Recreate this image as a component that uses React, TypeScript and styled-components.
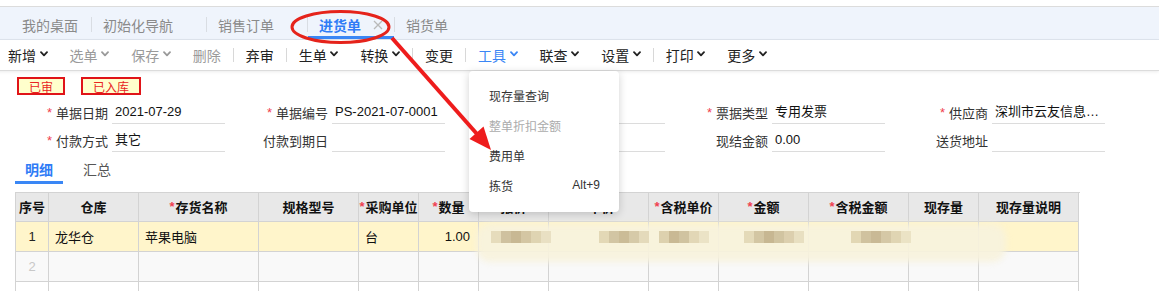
import React from "react";
import styled, { createGlobalStyle, css } from "styled-components";

const GlobalStyle = createGlobalStyle`
  html, body { margin: 0; padding: 0; background: #ffffff; }
  body { font-family: "Liberation Sans", "Noto Sans CJK SC", sans-serif; }
  * { box-sizing: border-box; }
`;

const FONT = `"Liberation Sans", "Noto Sans CJK SC", sans-serif`;

const Page = styled.div`
  position: relative;
  width: 1159px;
  height: 291px;
  overflow: hidden;
  font-family: ${FONT};
  padding-top: 6px;
`;

/* ---------- tab bar ---------- */
const TabBar = styled.div`
  display: flex;
  align-items: stretch;
  height: 34px;
  background: #eff4fc;
  border-top: 1px solid #dcdcdc;
  border-bottom: 1px solid #dfe5ee;
  padding-left: 11px;
`;

const Tab = styled.div<{ $active?: boolean; $padRight: number }>`
  display: flex;
  align-items: center;
  height: 32px;
  padding: 6px ${(p) => p.$padRight}px 0 11px;
  font-size: 14px;
  color: #8a8a8a;
  border-bottom: 3px solid transparent;
  white-space: nowrap;
  ${(p) =>
    p.$active &&
    css`
      color: #2f7cf6;
      font-weight: bold;
      border-bottom-color: #3a87f5;
    `}
`;

const TabSep = styled.div`
  align-self: center;
  width: 1px;
  height: 15px;
  margin-top: 3px;
  background: #d9dde3;
`;

const CloseX = styled.svg`
  margin-left: 12px;
  width: 10px;
  height: 10px;
`;

/* ---------- toolbar ---------- */
const Toolbar = styled.div`
  position: relative;
  z-index: 5;
  display: flex;
  align-items: center;
  height: 31px;
  border-bottom: 1px solid #dcdcdc;
  box-shadow: 0 1px 3px rgba(0, 0, 0, 0.08);
  background: #fff;
  margin-left: -3px;
`;

const ToolButton = styled.div<{ $tone: "normal" | "disabled" | "active" }>`
  position: relative;
  display: flex;
  align-items: center;
  height: 30px;
  padding: 0 11px;
  font-size: 14px;
  white-space: nowrap;
  color: ${(p) =>
    p.$tone === "disabled" ? "#9a9a9a" : p.$tone === "active" ? "#3b86f5" : "#222"};
`;

const Chevron = styled.svg`
  width: 8px;
  height: 6px;
  margin-left: 3.6px;
  margin-top: -3px;
`;

const ToolSep = styled.div`
  width: 1px;
  height: 14px;
  margin: 0 1px;
  background: #d8d8d8;
`;

/* ---------- dropdown ---------- */
const Menu = styled.div`
  position: absolute;
  top: calc(100% + 1px);
  left: 2px;
  width: 150px;
  padding: 9px 0 12px;
  background: #fff;
  border-radius: 4px;
  box-shadow: 0 2px 8px rgba(0, 0, 0, 0.18);
  z-index: 20;
`;

const MenuItem = styled.div<{ $disabled?: boolean }>`
  display: flex;
  align-items: center;
  justify-content: space-between;
  height: 30px;
  padding: 0 19px 0 20px;
  font-size: 12px;
  color: ${(p) => (p.$disabled ? "#ababab" : "#333")};
`;

/* ---------- content ---------- */
const Content = styled.div`
  display: flex;
  flex-direction: column;
`;

const Badges = styled.div`
  display: flex;
  gap: 16px;
  margin-top: 6px;
  padding-left: 17px;
`;

const Badge = styled.div`
  height: 18px;
  padding: 0 10px;
  display: flex;
  align-items: center;
  border: 2px solid #e01418;
  background: #ffffcc;
  color: #e8251f;
  font-size: 12px;
`;

const FormGrid = styled.div`
  display: grid;
  grid-template-columns: repeat(5, 220px);
  row-gap: 2px;
  margin-top: 3px;
  padding-left: 8px;
`;

const FormItem = styled.div`
  display: flex;
  align-items: flex-end;
`;

const Label = styled.div`
  width: 100px;
  margin-right: 4px;
  height: 25px;
  padding-top: 2px;
  display: flex;
  align-items: center;
  justify-content: flex-end;
  font-size: 13px;
  color: #333;
  white-space: nowrap;
`;

const Star = styled.span<{ $gap?: boolean }>`
  color: #f0404f;
  font-family: "Liberation Sans", sans-serif;
  margin-right: ${(p) => (p.$gap ? 4 : 1)}px;
`;

const Field = styled.div`
  width: 113px;
  height: 26px;
  line-height: 23px;
  padding: 2px 0 0 3px;
  border-bottom: 1px solid #dcdcdc;
  font-size: 13px;
  color: #111;
  white-space: nowrap;
  overflow: hidden;
  text-overflow: ellipsis;
`;

const DetailTabs = styled.div`
  display: flex;
  gap: 10px;
  margin-top: 4px;
  padding-left: 15px;
`;

const DetailTab = styled.div<{ $active?: boolean }>`
  height: 28px;
  padding: 0 10px;
  display: flex;
  align-items: center;
  font-size: 14px;
  color: #555;
  border-bottom: 3px solid transparent;
  ${(p) =>
    p.$active &&
    css`
      color: #2f7cf6;
      font-weight: bold;
      border-bottom-color: #3a87f5;
    `}
`;

/* ---------- table ---------- */
const TableWrap = styled.div`
  position: relative;
  margin-top: 8px;
  margin-left: 15px;
  width: 1065px;
`;

const Grid = styled.div<{ $cols: string }>`
  display: grid;
  grid-template-columns: ${(p) => p.$cols};
  border-left: 1px solid #d3d3d3;
  border-top: 1px solid #d3d3d3;
`;

const Cell = styled.div<{ $kind: "head" | "sel" | "alt" | "plain"; $align?: string }>`
  display: flex;
  align-items: center;
  justify-content: ${(p) => p.$align || "flex-start"};
  padding: 0 6px;
  border-right: 1px solid #d3d3d3;
  border-bottom: 1px solid #d3d3d3;
  font-size: 13px;
  color: #111;
  white-space: nowrap;
  overflow: hidden;
  height: ${(p) => (p.$kind === "head" ? 29 : 30)}px;
  background: ${(p) =>
    p.$kind === "head" ? "#e8e8e8" : p.$kind === "sel" ? "#fff5cb" : p.$kind === "alt" ? "#f9f9f9" : "#fff"};
  ${(p) =>
    p.$kind === "head" &&
    css`
      font-weight: bold;
      color: #111;
      padding: 0 2px 1px;
    `}
`;

const RowNo = styled.span<{ $muted?: boolean }>`
  color: ${(p) => (p.$muted ? "#c8c8c8" : "#222")};
`;

const Smudge = styled.div`
  position: absolute;
  left: 461px;
  top: 30px;
  width: 530px;
  height: 40px;
  pointer-events: none;
`;

const SmudgeWash = styled.div`
  position: absolute;
  inset: 2px 0 0 0;
  border-radius: 14px;
  background: rgba(248, 242, 221, 0.93);
  filter: blur(3px);
`;

const Tile = styled.div`
  position: absolute;
  height: 12px;
  top: 9px;
  filter: blur(0.6px);
`;

/* ---------- annotation ---------- */
const Annotation = styled.svg`
  position: absolute;
  left: 0;
  top: 0;
  width: 1159px;
  height: 291px;
  pointer-events: none;
  z-index: 30;
`;

const ChevronIcon = ({ color }: { color: string }) => (
  <Chevron viewBox="0 0 8 6">
    <path d="M1 1.2 L4 4.4 L7 1.2" fill="none" stroke={color} strokeWidth="1.8" strokeLinecap="round" strokeLinejoin="round" />
  </Chevron>
);

type ToolDef = { label: string; tone?: "normal" | "disabled" | "active"; caret?: boolean; sep?: boolean; menu?: boolean };

const tools: ToolDef[] = [
  { label: "新增", caret: true },
  { label: "选单", caret: true, tone: "disabled" },
  { label: "保存", caret: true, tone: "disabled" },
  { label: "删除", tone: "disabled", sep: true },
  { label: "弃审", sep: true },
  { label: "生单", caret: true },
  { label: "转换", caret: true, sep: true },
  { label: "变更", sep: true },
  { label: "工具", caret: true, tone: "active", menu: true },
  { label: "联查", caret: true },
  { label: "设置", caret: true, sep: true },
  { label: "打印", caret: true },
  { label: "更多", caret: true },
];

const toneColor = (t?: string) => (t === "disabled" ? "#9a9a9a" : t === "active" ? "#3b86f5" : "#222");

type FormDef = { label: string; req?: boolean; value?: string };
const formRows: FormDef[][] = [
  [
    { label: "单据日期", req: true, value: "2021-07-29" },
    { label: "单据编号", req: true, value: "PS-2021-07-0001" },
    { label: "部门", value: "" },
    { label: "票据类型", req: true, value: "专用发票" },
    { label: "供应商", req: true, value: "深圳市云友信息技术有限公司" },
  ],
  [
    { label: "付款方式", req: true, value: "其它" },
    { label: "付款到期日", value: "" },
    { label: "业务员", value: "" },
    { label: "现结金额", value: "0.00" },
    { label: "送货地址", value: "" },
  ],
];

const colWidths = [33, 90, 120, 100, 60, 60, 70, 100, 70, 90, 100, 70, 100];
const headers: { t: string; req?: boolean }[] = [
  { t: "序号" },
  { t: "仓库" },
  { t: "存货名称", req: true },
  { t: "规格型号" },
  { t: "采购单位", req: true },
  { t: "数量", req: true },
  { t: "报价" },
  { t: "单价", req: true },
  { t: "含税单价", req: true },
  { t: "金额", req: true },
  { t: "含税金额", req: true },
  { t: "现存量" },
  { t: "现存量说明" },
];

const row1: { v: string; align?: string }[] = [
  { v: "1", align: "center" },
  { v: "龙华仓" },
  { v: "苹果电脑" },
  { v: "" },
  { v: "台" },
  { v: "1.00", align: "flex-end" },
  { v: "" },
  { v: "" },
  { v: "" },
  { v: "" },
  { v: "" },
  { v: "" },
  { v: "" },
];

const tileGroups: { x: number; colors: string[] }[] = [
  { x: 15, colors: ["#e6dcbc", "#cfc19f", "#c8b893", "#d4c6a3", "#dfd4b2", "#e9e0c3"] },
  { x: 123, colors: ["#e3d8b6", "#d2c5a3", "#cbbc97", "#d6caa8", "#e4dabb"] },
  { x: 183, colors: ["#ddd1ae", "#c9b994", "#d0c3a0", "#e2d7b6", "#ebe3c6"] },
  { x: 268, colors: ["#e4dab9", "#d3c6a3", "#c7b792", "#d1c4a1", "#dccfae", "#e8dfc1"] },
  { x: 375, colors: ["#e2d7b4", "#d0c29f", "#c9b995", "#d5c8a6", "#e0d5b3", "#ebe3c5"] },
];

export default function App() {
  const cols = colWidths.map((w) => `${w}px`).join(" ");
  return (
    <Page>
      <GlobalStyle />
      <TabBar>
        <Tab $padRight={13}>我的桌面</Tab>
        <TabSep />
        <Tab $padRight={33}>初始化导航</Tab>
        <TabSep />
        <Tab $padRight={33}>销售订单</Tab>
        <TabSep />
        <Tab $active $padRight={11}>
          进货单
          <CloseX viewBox="0 0 10 10">
            <path d="M1 1 L9 9 M9 1 L1 9" stroke="#b9b9b9" strokeWidth="1.3" />
          </CloseX>
        </Tab>
        <TabSep />
        <Tab $padRight={33}>销货单</Tab>
      </TabBar>

      <Toolbar>
        {tools.map((t) => (
          <React.Fragment key={t.label}>
            <ToolButton $tone={t.tone || "normal"}>
              {t.label}
              {t.caret && <ChevronIcon color={toneColor(t.tone)} />}
              {t.menu && (
                <Menu>
                  <MenuItem>现存量查询</MenuItem>
                  <MenuItem $disabled>整单折扣金额</MenuItem>
                  <MenuItem>费用单</MenuItem>
                  <MenuItem>
                    <span>拣货</span>
                    <span>Alt+9</span>
                  </MenuItem>
                </Menu>
              )}
            </ToolButton>
            {t.sep && <ToolSep />}
          </React.Fragment>
        ))}
      </Toolbar>

      <Content>
        <Badges>
          <Badge>已审</Badge>
          <Badge>已入库</Badge>
        </Badges>

        <FormGrid>
          {formRows.flat().map((f, i) => (
            <FormItem key={i}>
              <Label>
                {f.req && <Star $gap>*</Star>}
                {f.label}
              </Label>
              <Field>{f.value}</Field>
            </FormItem>
          ))}
        </FormGrid>

        <DetailTabs>
          <DetailTab $active>明细</DetailTab>
          <DetailTab>汇总</DetailTab>
        </DetailTabs>

        <TableWrap>
          <Grid $cols={cols}>
            {headers.map((h) => (
              <Cell key={h.t} $kind="head" $align="center">
                {h.req && <Star>*</Star>}
                {h.t}
              </Cell>
            ))}
            {row1.map((c, i) => (
              <Cell key={`r1-${i}`} $kind="sel" $align={c.align} style={i === 5 ? { paddingRight: 8 } : undefined}>
                {i === 0 ? <RowNo>{c.v}</RowNo> : c.v}
              </Cell>
            ))}
            {colWidths.map((_, i) => (
              <Cell key={`r2-${i}`} $kind="alt" $align={i === 0 ? "center" : undefined}>
                {i === 0 && <RowNo $muted>2</RowNo>}
              </Cell>
            ))}
            {colWidths.map((_, i) => (
              <Cell key={`r3-${i}`} $kind="plain" />
            ))}
          </Grid>
          <Smudge>
            <SmudgeWash />
            {tileGroups.map((g, gi) =>
              g.colors.map((c, ci) => (
                <Tile key={`${gi}-${ci}`} style={{ left: g.x + ci * 10, width: 10, background: c }} />
              ))
            )}
          </Smudge>
        </TableWrap>
      </Content>

      <Annotation viewBox="0 0 1159 291">
        <ellipse cx="340.5" cy="27" rx="48.5" ry="15.5" fill="none" stroke="#e5231b" strokeWidth="3" />
        <line x1="392" y1="38" x2="477" y2="134" stroke="#ee1c1c" strokeWidth="4" />
        <polygon points="491,150 469.5,139 483.5,126.5" fill="#ee1c1c" />
      </Annotation>
    </Page>
  );
}
